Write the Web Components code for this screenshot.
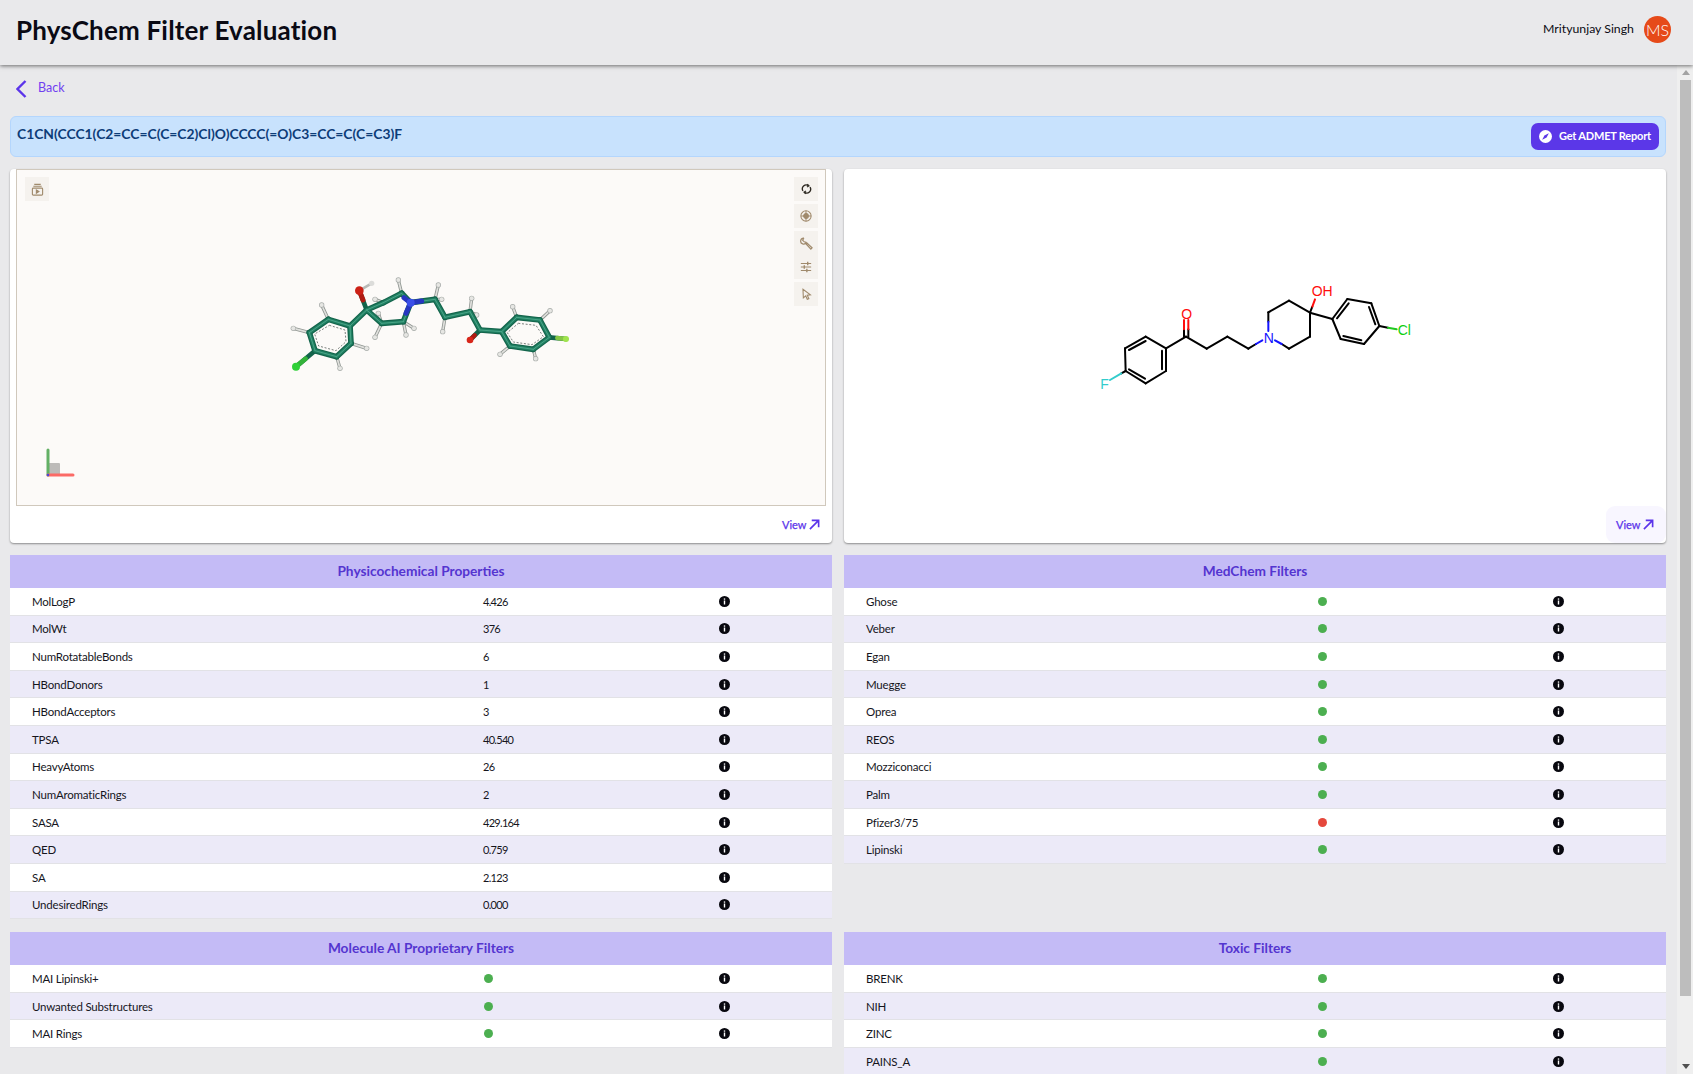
<!DOCTYPE html>
<html>
<head>
<meta charset="utf-8">
<title>PhysChem Filter Evaluation</title>
<style>
html,body{margin:0;height:100%;overflow:hidden;background:#e9e9eb;font-family:Lato,"Open Sans",sans-serif;color:#0c0c14}
body{display:flex;flex-direction:column}
.grid{display:grid;grid-template-columns:1fr 1fr;column-gap:12px;row-gap:12px;align-items:start}
.shell{flex:1;display:flex;min-height:0}
.page{flex:1;min-width:0;overflow:hidden;padding:0 11px 0 10px}
.low{margin-top:1px}
</style>
</head>
<body>
<app-header title-text="PhysChem Filter Evaluation" user="Mrityunjay Singh" initials="MS"></app-header>
<div class="shell">
  <div class="page">
    <back-link>Back</back-link>
    <smiles-bar>C1CN(CCC1(C2=CC=C(C=C2)Cl)O)CCCC(=O)C3=CC=C(C=C3)F</smiles-bar>
    <div class="grid">
      <viewer-card></viewer-card>
      <sketch-card></sketch-card>
      <prop-table heading="Physicochemical Properties">
        <prop-row name="MolLogP" value="4.426"></prop-row>
        <prop-row name="MolWt" value="376"></prop-row>
        <prop-row name="NumRotatableBonds" value="6"></prop-row>
        <prop-row name="HBondDonors" value="1"></prop-row>
        <prop-row name="HBondAcceptors" value="3"></prop-row>
        <prop-row name="TPSA" value="40.540"></prop-row>
        <prop-row name="HeavyAtoms" value="26"></prop-row>
        <prop-row name="NumAromaticRings" value="2"></prop-row>
        <prop-row name="SASA" value="429.164"></prop-row>
        <prop-row name="QED" value="0.759"></prop-row>
        <prop-row name="SA" value="2.123"></prop-row>
        <prop-row name="UndesiredRings" value="0.000"></prop-row>
      </prop-table>
      <prop-table heading="MedChem Filters">
        <prop-row name="Ghose" status="pass"></prop-row>
        <prop-row name="Veber" status="pass"></prop-row>
        <prop-row name="Egan" status="pass"></prop-row>
        <prop-row name="Muegge" status="pass"></prop-row>
        <prop-row name="Oprea" status="pass"></prop-row>
        <prop-row name="REOS" status="pass"></prop-row>
        <prop-row name="Mozziconacci" status="pass"></prop-row>
        <prop-row name="Palm" status="pass"></prop-row>
        <prop-row name="Pfizer3/75" status="fail"></prop-row>
        <prop-row name="Lipinski" status="pass"></prop-row>
      </prop-table>
      <prop-table class="low" heading="Molecule AI Proprietary Filters">
        <prop-row name="MAI Lipinski+" status="pass"></prop-row>
        <prop-row name="Unwanted Substructures" status="pass"></prop-row>
        <prop-row name="MAI Rings" status="pass"></prop-row>
      </prop-table>
      <prop-table class="low" heading="Toxic Filters">
        <prop-row name="BRENK" status="pass"></prop-row>
        <prop-row name="NIH" status="pass"></prop-row>
        <prop-row name="ZINC" status="pass"></prop-row>
        <prop-row name="PAINS_A" status="pass"></prop-row>
      </prop-table>
    </div>
  </div>
  <fake-scrollbar></fake-scrollbar>
</div>

<script>
class AppHeader extends HTMLElement{
  constructor(){super();this.attachShadow({mode:"open"})}
  connectedCallback(){
    this.shadowRoot.innerHTML=`
    <style>
      :host{display:flex;flex:none;height:65px;align-items:center;justify-content:space-between;padding:0 22px 0 16px;background:#e9e9eb;box-shadow:0 1px 4px rgba(0,0,0,.55);position:relative;z-index:2}
      h1{margin:0 0 5px;font-size:26px;font-weight:700;letter-spacing:.18px;color:#0a0a14}
      .user{display:flex;align-items:center;gap:10px;font-size:12.3px;margin-bottom:6px}
      .name{margin-bottom:2px}
      .avatar{width:27px;height:27px;border-radius:50%;background:#e64a19;color:#fff;font-size:16px;font-weight:300;display:flex;align-items:center;justify-content:center}
    </style>
    <h1>${this.getAttribute("title-text")}</h1>
    <div class="user"><span class="name">${this.getAttribute("user")}</span><div class="avatar">${this.getAttribute("initials")}</div></div>`
  }
}
class BackLink extends HTMLElement{
  constructor(){super();this.attachShadow({mode:"open"}).innerHTML=`
    <style>
      :host{display:flex;align-items:center;box-sizing:border-box;height:51px;padding:0 0 6px 6px;gap:11px;color:#7040f0;font-size:12.5px}
      svg{display:block;margin-top:2px}
    </style>
    <svg width="11" height="18" viewBox="0 0 11 18" fill="none" stroke="#5b34ea" stroke-width="2.4"><path d="M9.500 1L1.500 9L9.500 17"/></svg>
    <slot></slot>`
  }
}
class SmilesBar extends HTMLElement{
  constructor(){super();this.attachShadow({mode:"open"}).innerHTML=`
    <style>
      :host{display:flex;justify-content:space-between;box-sizing:border-box;height:41px;margin-bottom:12px;padding:0 6px;background:#c8e2fd;border:1px solid #b4d6fd;border-radius:6px}
      .smi{font-size:13.85px;font-weight:700;color:#0d3c78;padding-top:8px}
      button{align-self:center;display:flex;align-items:center;gap:7px;height:27px;width:128px;box-sizing:border-box;padding:0 0 0 8px;border:0;border-radius:7px;background:#5b37e8;color:#fff;font:700 11px Lato,sans-serif;letter-spacing:-.2px;white-space:nowrap}
      button span{padding-bottom:3px}
    </style>
    <div class="smi"><slot></slot></div>
    <button><svg width="13" height="13" viewBox="0 0 13 13"><circle cx="6.500" cy="6.500" r="6.500" fill="#fff"/><path d="M9.800 3.200L7.600 7.600L3.200 9.800L5.400 5.400Z" fill="#5b37e8"/></svg><span>Get ADMET Report</span></button>`
  }
}
const viewIcon=`<svg width="11" height="11" viewBox="0 0 12 12" fill="none" stroke="#5b34ea" stroke-width="1.800"><path d="M1 11L10.500 1.500M3 1.500H10.500V9"/></svg>`;
const cardCss=`
  :host{display:block;position:relative;box-sizing:border-box;height:374px;background:#fff;border-radius:4px;box-shadow:0 1px 2px rgba(0,0,0,.4)}
  .view{position:absolute;right:0;bottom:0;box-sizing:border-box;height:37px;width:60px;display:flex;align-items:center;gap:3px;padding-left:10px;border-radius:9px;color:#5b34ea;font-size:11px}
  .view span{-webkit-text-stroke:.25px #5b34ea}
`;
class ViewerCard extends HTMLElement{
  constructor(){super();this.attachShadow({mode:"open"})}
  tool(icon){return `<div class="tool">${icon}</div>`}
  connectedCallback(){
    const tan='fill="none" stroke="#a08a6c" stroke-width="1.200"';
    const ic={
      cam:`<svg width="13" height="13" viewBox="0 0 14 14" ${tan}><path d="M3.500 1.500H10.500M2.500 3.500H11.500"/><rect x="1.500" y="5.500" width="11" height="7.500" rx="1"/><path d="M5.800 7.500L8.500 9.200L5.800 11Z" fill="#a08a6c"/></svg>`,
      sync:`<svg width="11" height="12" viewBox="0 0 14 14" fill="none" stroke="#2c2820" stroke-width="1.700"><path d="M2.500 9.500A5 5 0 0 1 9.500 2.700M11.500 4.500A5 5 0 0 1 4.500 11.300"/><path d="M8 .8L10.300 3L7.500 4.400M6 13.200L3.700 11L6.500 9.600" stroke-width="1.300"/></svg>`,
      aim:`<svg width="12" height="12" viewBox="0 0 14 14" ${tan}><circle cx="7" cy="7" r="6"/><circle cx="7" cy="7" r="2.800" fill="#a08a6c"/><path d="M7 1V4.500M7 9.500V13M1 7H4.500M9.500 7H13"/></svg>`,
      wrench:`<svg width="13" height="13" viewBox="0 0 14 14" fill="none" stroke="#a08a6c" stroke-width="1.300"><path d="M4.200 1.200A3.200 3.200 0 1 0 6.800 5.800"/><path d="M4.200 1.200L2.800 3.400L4.600 5.200L6.800 5.800"/><path d="M6.300 7.300L7.300 6.300L13 11.600L11.700 13Z"/></svg>`,
      sliders:`<svg width="12" height="12" viewBox="0 0 14 14" ${tan}><path d="M1 3H13M1 7H13M1 11H13"/><path d="M9 1V5M5 5V9M8 9V13" stroke-width="1.600"/></svg>`,
      pointer:`<svg width="11" height="12" viewBox="0 0 14 14" fill="none" stroke="#a08a6c" stroke-width="1.400"><path d="M2.500 1L12 8L8 8.600L10 13L8 13.800L6 9.300L3 12Z"/></svg>`
    };
    this.shadowRoot.innerHTML=`
    <style>${cardCss}
      .stage{position:absolute;left:6px;right:6px;top:0;height:337px;box-sizing:border-box;background:#fcfaf8;border:1px solid #d0c8bc}
      .tool{background:#f5f2ee;width:24px;height:24px;display:flex;align-items:center;justify-content:center}
      .left{position:absolute;left:8px;top:7px}
      .right{position:absolute;right:7px;top:7px;display:flex;flex-direction:column;gap:3px}
      .dbl{height:48px;background:#f5f2ee;width:24px;display:flex;flex-direction:column;align-items:center;justify-content:space-around}
      .mol{position:absolute;left:253px;top:90px;filter:blur(.5px)}
      .axes{position:absolute;left:28px;top:278px;filter:blur(.4px)}
    </style>
    <div class="stage">
      <div class="left">${this.tool(ic.cam)}</div>
      <div class="right">
        ${this.tool(ic.sync)}
        ${this.tool(ic.aim)}
        <div class="dbl">${ic.wrench}${ic.sliders}</div>
        ${this.tool(ic.pointer)}
      </div>
      <mol-three class="mol"></mol-three>
      <svg class="axes" width="32" height="30" viewBox="0 0 32 30">
        <rect x="3" y="15" width="12" height="12" rx="1" fill="#bdbbb9"/>
        <path d="M3 2V27" stroke="#63b065" stroke-width="3" stroke-linecap="round"/>
        <path d="M3 27H28" stroke="#fb6a66" stroke-width="3" stroke-linecap="round"/>
        <circle cx="3" cy="27" r="1.300" fill="#4a48d8"/>
      </svg>
    </div>
    <div class="view"><span>View</span>${viewIcon}</div>`
  }
}
class MolThree extends HTMLElement{
  constructor(){super();this.attachShadow({mode:"open"})}
  connectedCallback(){
    // coordinates read off a 3x crop, hence viewBox 960x390
    const bonds=[
      [175,178,240,198],[240,198,243,250],[243,250,200,290],[200,290,135,272],[135,272,118,218],[118,218,175,178],
      [240,198,290,150],[290,150,340,128],[340,128,395,100],[395,100,422,128],[422,128,400,185],[400,185,335,190],[335,190,290,150],
      [422,128,495,118],[495,118,525,172],[525,172,600,155],[600,155,630,210],[630,210,695,215],
      [695,215,740,172],[740,172,810,180],[810,180,838,232],[838,232,790,268],[790,268,720,258],[720,258,695,215]
    ];
    const hs=[[175,178,155,135],[118,218,70,205],[243,250,290,265],[200,290,210,325],
      [395,100,385,60],[340,128,315,118],[335,190,325,160],[335,190,315,232],[400,185,408,225],[400,185,432,205],
      [495,118,505,75],[525,172,518,215],[600,155,605,115],[740,172,728,140],[810,180,840,152],[790,268,797,296],[720,258,690,283],[495,118,515,118],[600,155,620,165]
    ];
    const line=(b,s,w)=>`<line x1="${b[0]}" y1="${b[1]}" x2="${b[2]}" y2="${b[3]}" stroke="${s}" stroke-width="${w}" stroke-linecap="round"/>`;
    const dash=(pts)=>`<polygon points="${pts}" fill="none" stroke="#5f6663" stroke-width="2.500" stroke-dasharray="6 5"/>`;
    const ball=(x,y,r,c)=>`<circle cx="${x}" cy="${y}" r="${r}" fill="${c}"/>`;
    this.shadowRoot.innerHTML=`
    <style>:host{display:block;width:320px;height:130px}svg{display:block}</style>
    <svg width="320" height="130" viewBox="0 0 960 390">
      ${hs.map(h=>line(h,"#8f9591",10)).join("")}
      ${hs.map(h=>line(h,"#e0e0dd",5)).join("")}
      ${hs.map(h=>ball(h[2],h[3],8,"#a9adaa")).join("")}
      ${hs.map(h=>ball(h[2],h[3],6,"#e6e6e3")).join("")}
      ${line([268,92,305,70],"#b8bab7",8)}${ball(305,70,8,"#dcdcda")}
      ${line([290,150,268,92],"#13644b",14)}
      ${line([630,210,600,240],"#13644b",14)}
      ${line([135,272,78,320],"#13644b",14)}${line([838,232,888,237],"#13644b",14)}
      ${bonds.map(b=>line(b,"#13644b",17)).join("")}
      ${bonds.map(b=>line(b,"#218063",10)).join("")}
      ${bonds.map(b=>line(b,"#4aa587",3)).join("")}
      ${dash("178,196 225,210 228,245 198,272 146,258 134,222")}
      ${dash("745,190 798,196 820,230 786,254 730,246 712,218")}
      ${line([422,128,455,123],"#2636c0",15)}${line([422,128,408,160],"#2636c0",15)}${line([422,128,402,113],"#2636c0",15)}
      ${ball(422,128,12,"#3a4ee8")}
      ${line([268,92,279,120],"#b01a12",15)}${ball(268,92,13,"#cc2016")}
      ${line([600,240,614,226],"#b01a12",13)}${ball(600,240,10,"#d8261a")}
      ${line([78,320,107,296],"#33b23a",14)}${ball(78,320,12,"#2fd038")}
      ${line([888,237,862,234],"#84c744",14)}${ball(888,237,9,"#a0e44e")}
    </svg>`
  }
}
class SketchCard extends HTMLElement{
  constructor(){super();this.attachShadow({mode:"open"})}
  connectedCallback(){
    const k=[
      [137,303,135,235],[135,235,197,200],[197,200,258,235],[258,235,258,303],[258,303,197,340],[197,340,137,303],
      [147,240,197,213],[246,242,246,298],[147,298,195,326],
      [258,235,318,200],[318,200,380,236],[380,236,442,200],[442,200,505,236],[505,236,528,222],
      [565,155,565,127],[565,127,627,92],[627,92,690,128],[690,128,690,200],[690,200,627,236],[627,236,605,222],
      [690,128,697,110],[690,128,757,147],[757,147,802,87],[802,87,874,100],[874,100,898,168],[898,168,852,222],[852,222,782,207],[782,207,757,147],
      [771,145,806,100],[867,111,886,163],[844,211,790,198],[898,168,924,173],[137,303,124,310]
    ];
    const col=(c,arr)=>arr.map(b=>`<line x1="${b[0]}" y1="${b[1]}" x2="${b[2]}" y2="${b[3]}" stroke="${c}"/>`).join("");
    this.shadowRoot.innerHTML=`
    <style>${cardCss}
      .mol{position:absolute;left:236px;top:101px}
      .view{background:#f8f6ff}
      text{font-family:"Liberation Sans",Arial,sans-serif;font-size:42px}
    </style>
    <svg class="mol" width="360" height="130" viewBox="0 0 1080 390" fill="none" stroke-width="6" stroke-linecap="round">
      ${col("#000",k)}
      ${col("#000",[[312,200,312,178],[325,200,325,178]])}
      ${col("#ff0d0d",[[312,178,312,150],[325,178,325,150],[697,110,705,88]])}
      ${col("#1414ff",[[528,222,547,211],[565,155,565,183],[605,222,585,211]])}
      ${col("#20c820",[[924,173,950,178]])}
      ${col("#33cccc",[[124,310,90,330]])}
      <text x="304" y="146" fill="#ff0d0d" stroke="none">O</text>
      <text x="695" y="79" fill="#ff0d0d" stroke="none">OH</text>
      <text x="551" y="218" fill="#1414ff" stroke="none">N</text>
      <text x="953" y="196" fill="#0fcf0f" stroke="none">Cl</text>
      <text x="61" y="358" fill="#33cccc" stroke="none">F</text>
    </svg>
    <div class="view"><span>View</span>${viewIcon}</div>`
  }
}
class PropTable extends HTMLElement{
  constructor(){super();this.attachShadow({mode:"open"})}
  connectedCallback(){
    this.shadowRoot.innerHTML=`
    <style>
      :host{display:block}
      .head{height:33px;box-sizing:border-box;padding-bottom:3px;display:flex;align-items:center;justify-content:center;background:#c4bbf6;color:#5435d0;font-size:13.7px;font-weight:700}
    </style>
    <div class="head">${this.getAttribute("heading")}</div>
    <slot></slot>`
  }
}
class PropRow extends HTMLElement{
  constructor(){super();this.attachShadow({mode:"open"})}
  connectedCallback(){
    const st=this.getAttribute("status");
    const mid=st?`<span class="dot" style="background:${st==="pass"?"#4caf50":"#e5483c"}"></span>`:`<span class="num">${this.getAttribute("value")||""}</span>`;
    this.shadowRoot.innerHTML=`
    <style>
      :host{display:grid;grid-template-columns:452px 235px 1fr;align-items:center;box-sizing:border-box;height:27.6px;padding-left:22px;background:#fff;border-bottom:1px solid #e2e2e6;font-size:11.5px;letter-spacing:-.2px;color:#15151c}
      :host(:nth-child(even)){background:#eceaf8}
      .num{font-size:11px;letter-spacing:-.7px;margin-left:-1px}
      .dot{display:block;width:9px;height:9px;border-radius:50%}
      svg{display:block}
    </style>
    <div>${this.getAttribute("name")}</div>
    <div>${mid}</div>
    <svg width="11" height="11" viewBox="0 0 11 11"><circle cx="5.500" cy="5.500" r="5.500" fill="#08080f"/><rect x="4.800" y="4.500" width="1.400" height="4" fill="#fff"/><rect x="4.800" y="2.400" width="1.400" height="1.300" fill="#fff"/></svg>`
  }
}
class FakeScrollbar extends HTMLElement{
  constructor(){super();this.attachShadow({mode:"open"}).innerHTML=`
    <style>
      :host{display:flex;flex:none;flex-direction:column;align-items:flex-start;width:16px;background:#efefef;box-sizing:border-box;padding-left:3px}
      .arrow{height:15px;width:11px;display:flex;align-items:center;justify-content:center;flex:none}
      .thumb{width:11px;height:916px;background:#bdbdbd;flex:none}
      .gap{flex:1}
    </style>
    <div class="arrow"><svg width="8" height="5"><path d="M4 0L8 5H0Z" fill="#a3a3a3"/></svg></div>
    <div class="thumb"></div>
    <div class="gap"></div>
    <div class="arrow"><svg width="8" height="5"><path d="M0 0H8L4 5Z" fill="#505050"/></svg></div>`
  }
}
customElements.define("app-header",AppHeader);
customElements.define("back-link",BackLink);
customElements.define("smiles-bar",SmilesBar);
customElements.define("viewer-card",ViewerCard);
customElements.define("mol-three",MolThree);
customElements.define("sketch-card",SketchCard);
customElements.define("prop-table",PropTable);
customElements.define("prop-row",PropRow);
customElements.define("fake-scrollbar",FakeScrollbar);
</script>
</body>
</html>
